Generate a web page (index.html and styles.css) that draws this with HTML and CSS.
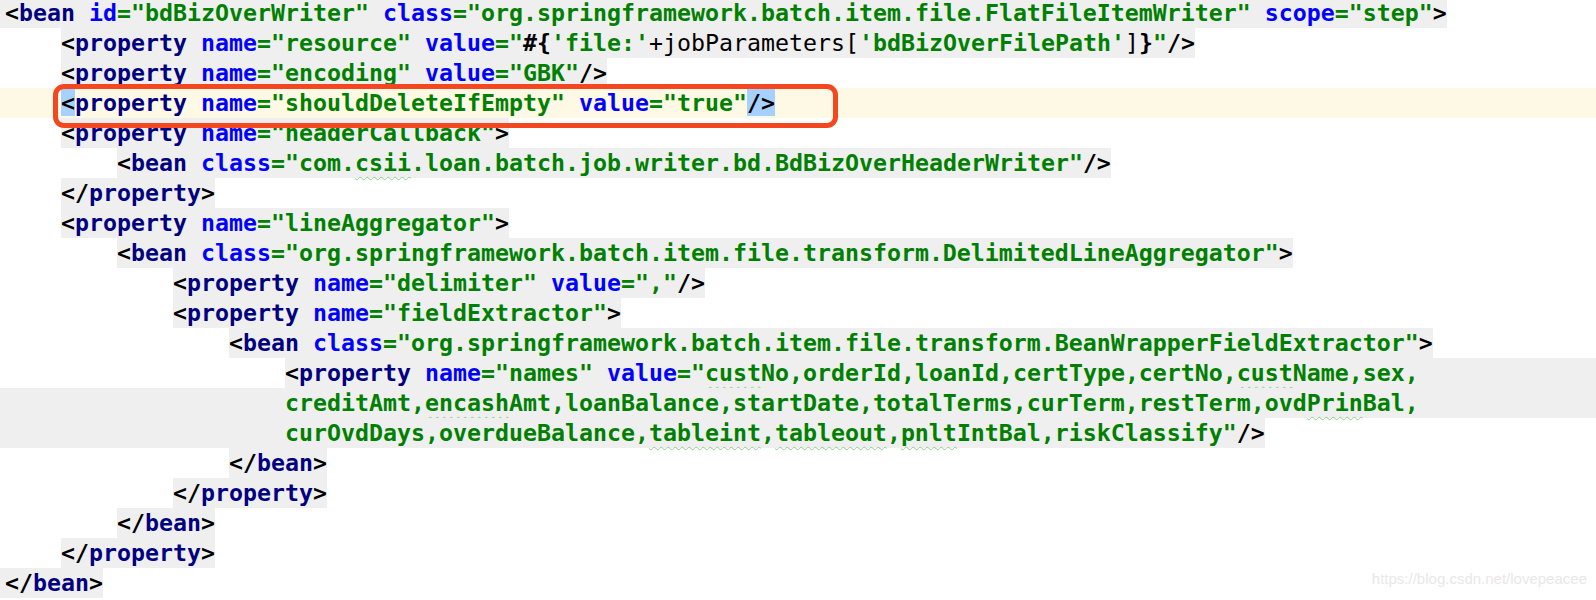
FILE: index.html
```html
<!DOCTYPE html>
<html>

<head>
    <title>bdBizOverWriter</title>
    <link rel="stylesheet" href="styles.css">
</head>

<body>

    <div class="editor">
        <div class="line"><span class="code edge"><span class="p">&lt;</span><span class="t">bean</span> <span class="a">id</span><span class="v">="bdBizOverWriter"</span> <span class="a">class</span><span class="v">="org.springframework.batch.item.file.FlatFileItemWriter"</span> <span class="a">scope</span><span class="v">="step"</span><span class="p">&gt;</span></span></div>
        <div class="line"><span class="ind">    </span><span class="code"><span class="p">&lt;</span><span class="t">property</span> <span class="a">name</span><span class="v">="resource"</span> <span class="a">value</span><span class="v">="</span><span class="p">#{</span><span class="v">'file:'</span><span class="x">+jobParameters[</span><span class="v">'bdBizOverFilePath'</span><span class="x">]</span><span class="p">}</span><span class="v">"</span><span class="p">/&gt;</span></span></div>
        <div class="line"><span class="ind">    </span><span class="code"><span class="p">&lt;</span><span class="t">property</span> <span class="a">name</span><span class="v">="encoding"</span> <span class="a">value</span><span class="v">="GBK"</span><span class="p">/&gt;</span></span></div>
        <div class="line current"><span class="ind">    </span><span class="code plain"><span class="p sel">&lt;</span><span class="t">property</span> <span class="a">name</span><span class="v">="shouldDeleteIfEmpty"</span> <span class="a">value</span><span class="v">="true"</span><span class="p sel">/&gt;</span></span></div>
        <div class="line"><span class="ind">    </span><span class="code"><span class="p">&lt;</span><span class="t">property</span> <span class="a">name</span><span class="v">="headerCallback"</span><span class="p">&gt;</span></span></div>
        <div class="line"><span class="ind">        </span><span class="code"><span class="p">&lt;</span><span class="t">bean</span> <span class="a">class</span><span class="v">="com.<span class="sq">csii</span>.loan.batch.job.writer.bd.BdBizOverHeaderWriter"</span><span class="p">/&gt;</span></span></div>
        <div class="line"><span class="ind">    </span><span class="code"><span class="p">&lt;/</span><span class="t">property</span><span class="p">&gt;</span></span></div>
        <div class="line"><span class="ind">    </span><span class="code"><span class="p">&lt;</span><span class="t">property</span> <span class="a">name</span><span class="v">="lineAggregator"</span><span class="p">&gt;</span></span></div>
        <div class="line"><span class="ind">        </span><span class="code"><span class="p">&lt;</span><span class="t">bean</span> <span class="a">class</span><span class="v">="org.springframework.batch.item.file.transform.DelimitedLineAggregator"</span><span class="p">&gt;</span></span></div>
        <div class="line"><span class="ind">            </span><span class="code"><span class="p">&lt;</span><span class="t">property</span> <span class="a">name</span><span class="v">="delimiter"</span> <span class="a">value</span><span class="v">=","</span><span class="p">/&gt;</span></span></div>
        <div class="line"><span class="ind">            </span><span class="code"><span class="p">&lt;</span><span class="t">property</span> <span class="a">name</span><span class="v">="fieldExtractor"</span><span class="p">&gt;</span></span></div>
        <div class="line"><span class="ind">                </span><span class="code"><span class="p">&lt;</span><span class="t">bean</span> <span class="a">class</span><span class="v">="org.springframework.batch.item.file.transform.BeanWrapperFieldExtractor"</span><span class="p">&gt;</span></span></div>
        <div class="line"><span class="ind">                    </span><span class="code grow"><span class="p">&lt;</span><span class="t">property</span> <span class="a">name</span><span class="v">="names"</span> <span class="a">value</span><span class="v">="<span class="sq">cust</span>No,orderId,loanId,certType,certNo,<span class="sq">cust</span>Name,sex,</span></span></div>
        <div class="line"><span class="code edge grow"><span class="v">                    creditAmt,<span class="sq">encash</span>Amt,loanBalance,startDate,totalTerms,curTerm,restTerm,ovd<span class="sq">Prin</span>Bal,</span></span></div>
        <div class="line"><span class="code edge"><span class="v">                    curOvdDays,overdueBalance,<span class="sq">tableint</span>,<span class="sq">tableout</span>,<span class="sq">pnlt</span>IntBal,riskClassify"</span><span class="p">/&gt;</span></span></div>
        <div class="line"><span class="ind">                </span><span class="code"><span class="p">&lt;/</span><span class="t">bean</span><span class="p">&gt;</span></span></div>
        <div class="line"><span class="ind">            </span><span class="code"><span class="p">&lt;/</span><span class="t">property</span><span class="p">&gt;</span></span></div>
        <div class="line"><span class="ind">        </span><span class="code"><span class="p">&lt;/</span><span class="t">bean</span><span class="p">&gt;</span></span></div>
        <div class="line"><span class="ind">    </span><span class="code"><span class="p">&lt;/</span><span class="t">property</span><span class="p">&gt;</span></span></div>
        <div class="line"><span class="code edge"><span class="p">&lt;/</span><span class="t">bean</span><span class="p">&gt;</span></span></div>

        <div class="mark-box"></div>
        <div class="watermark">https://blog.csdn.net/lovepeacee</div>
    </div>

</body>

</html>
```

FILE: styles.css
```css
body {
    margin: 0;
    background-color: #fff;
    overflow: hidden;
}

.editor {
    position: relative;
    height: 602px;
    margin-top: -2px;
    font-family: "DejaVu Sans Mono", "Liberation Mono", monospace;
    font-size: 23.25px;
    font-weight: bold;
}

.line {
    display: flex;
    height: 30px;
    line-height: 30px;
    padding-left: 5px;
    white-space: pre;
}

.line.current {
    background-color: #fef9e5;
}

.ind {
    white-space: pre;
}

.code {
    white-space: pre;
    background-color: #efefef;
}

.code.plain {
    background-color: transparent;
}

.code.edge {
    margin-left: -5px;
    padding-left: 5px;
}

.code.grow {
    flex: 1;
}

.p {
    color: #000;
}

.t {
    color: #000080;
}

.a {
    color: #0000ff;
}

.v {
    color: #008000;
}

.x {
    color: #000;
    font-weight: normal;
}

.sel {
    background-color: #a6d0fd;
}

.sq {
    text-decoration: underline wavy #93cf93;
    text-decoration-thickness: 1px;
    text-underline-offset: 5px;
}

.mark-box {
    position: absolute;
    left: 53px;
    top: 86px;
    width: 785px;
    height: 44px;
    box-sizing: border-box;
    border: 5px solid #f4471f;
    border-radius: 11px;
}

.watermark {
    position: absolute;
    right: 9px;
    top: 572px;
    font-family: "Liberation Sans", Arial, sans-serif;
    font-size: 15px;
    font-weight: normal;
    line-height: 18px;
    color: #e8e8e8;
}
```
